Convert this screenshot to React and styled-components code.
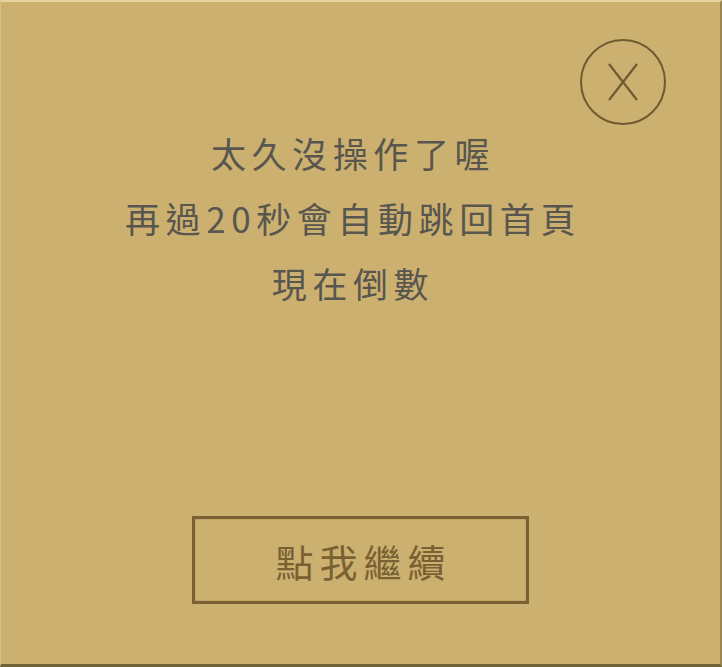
import React from 'react';
import styled, { createGlobalStyle } from 'styled-components';

const GlobalStyle = createGlobalStyle`
  html, body {
    margin: 0;
    padding: 0;
    background: #ccb06f;
  }
  * {
    box-sizing: border-box;
  }
`;

const Panel = styled.div`
  width: 722px;
  height: 667px;
  background: #ccb06f;
  border-top: 2px solid #e6d49f;
  border-left: 1px solid #d9c283;
  border-right: 2px solid #9a8550;
  border-bottom: 3px solid #6f6337;
  display: flex;
  flex-direction: column;
  align-items: center;
  font-family: "Noto Sans CJK TC", "Noto Sans", sans-serif;
`;

const Header = styled.div`
  width: 100%;
  display: flex;
  justify-content: flex-end;
  padding: 37px 54px 0 0;
`;

const CloseButton = styled.button`
  width: 86px;
  height: 86px;
  padding: 0;
  border: 2.5px solid #6f5a32;
  border-radius: 50%;
  background: transparent;
  display: flex;
  align-items: center;
  justify-content: center;
  cursor: pointer;
`;

const Message = styled.div`
  margin-top: -5px;
  padding-right: 15px;
  display: flex;
  flex-direction: column;
  align-items: center;
`;

const Line = styled.p`
  margin: 0;
  height: 65px;
  line-height: 65px;
  font-size: 35px;
  font-weight: 400;
  letter-spacing: 5.6px;
  color: #58564f;
`;

const Spacer = styled.div`
  flex: 1;
`;

const ContinueButton = styled.button`
  width: 337px;
  height: 88px;
  margin: 0 0 60px 0;
  border: 3px solid #7a6133;
  background: #ccb06f;
  box-shadow: inset 0 0 2px rgba(90, 70, 30, 0.35);
  color: #7a6133;
  font-family: "Noto Sans CJK TC", "Noto Sans", sans-serif;
  font-size: 38px;
  font-weight: 400;
  letter-spacing: 6px;
  padding: 0 0 0 6px;
  cursor: pointer;
`;

const CloseIcon = () => (
  <svg width="34" height="40" viewBox="0 0 34 40">
    <path d="M3 2 L31 38 M31 2 L3 38" stroke="#6f5a32" strokeWidth="2.2" fill="none" />
  </svg>
);

const App = () => (
  <>
    <GlobalStyle />
    <Panel>
      <Header>
        <CloseButton aria-label="close">
          <CloseIcon />
        </CloseButton>
      </Header>
      <Message>
        <Line>太久沒操作了喔</Line>
        <Line>再過20秒會自動跳回首頁</Line>
        <Line>現在倒數</Line>
      </Message>
      <Spacer />
      <ContinueButton>點我繼續</ContinueButton>
    </Panel>
  </>
);

export default App;
